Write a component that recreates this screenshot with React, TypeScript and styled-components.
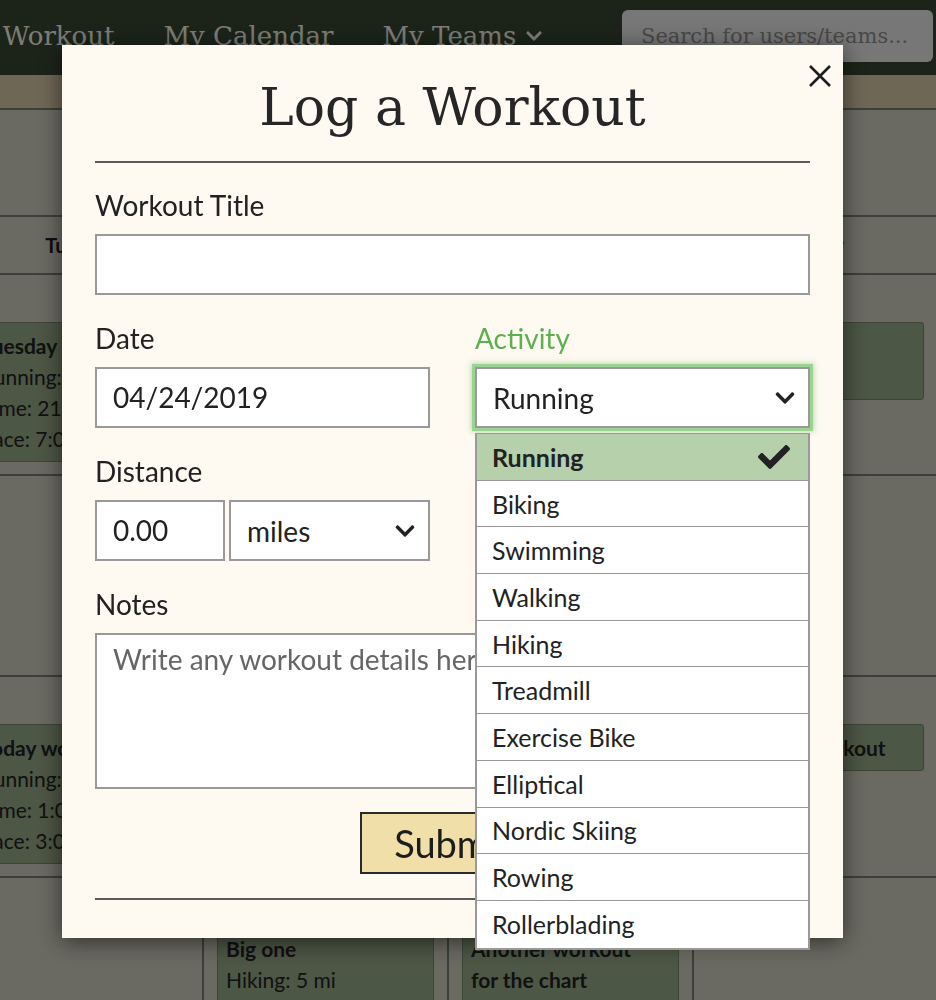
import React from "react";
import styled, { createGlobalStyle } from "styled-components";
import { FaCheck, FaChevronDown } from "react-icons/fa";

const GlobalStyle = createGlobalStyle`
  html, body { margin: 0; padding: 0; }
  body {
    width: 936px;
    height: 1000px;
    overflow: hidden;
    background: #d6d4c4;
    font-family: Lato, "Noto Sans", sans-serif;
  }
  * { box-sizing: border-box; }
`;

const Page = styled.div`
  width: 936px;
  height: 1000px;
  overflow: hidden;
  position: relative;
`;

const NavBar = styled.nav`
  height: 75px;
  background: #384832;
  display: flex;
  align-items: flex-start;
  padding-top: 10px;
`;

const NavLinks = styled.div`
  display: flex;
  gap: 49px;
  margin-left: -55px;
  flex: 1;
`;

const NavLink = styled.span`
  font-family: "DejaVu Serif", serif;
  font-size: 26px;
  line-height: 52px;
  color: #fbfbee;
  white-space: nowrap;
  display: flex;
  align-items: center;
  gap: 9px;
`;

const SearchBox = styled.div`
  width: 311px;
  height: 52px;
  margin-right: 3px;
  background: #eeeeee;
  border-radius: 6px;
  padding-left: 19px;
  font-family: "DejaVu Serif", serif;
  font-size: 21px;
  line-height: 52px;
  color: #919191;
  white-space: nowrap;
  overflow: hidden;
`;

const Band = styled.div`
  height: 35px;
  background: #decead;
  border-bottom: 2px solid #7e7e74;
`;

const Calendar = styled.div`
  margin-left: -41px;
  padding-top: 105px;
`;

const HeaderRow = styled.div`
  display: grid;
  grid-template-columns: repeat(4, 245px);
  height: 60px;
  border-top: 2px solid #7e7e74;
  border-bottom: 2px solid #7e7e74;
`;

const HeaderCell = styled.div`
  text-align: center;
  font-weight: 700;
  font-size: 20px;
  line-height: 56px;
  color: #1c1c1c;
`;

const WeekRow = styled.div`
  display: grid;
  grid-template-columns: repeat(4, 245px);
  height: 201px;
  border-bottom: 2px solid #7e7e74;
`;

const DayCell = styled.div`
  border-right: 2px solid #7e7e74;
  padding: 47px 13px 0;
`;

const Card = styled.div`
  background: #9aae8a;
  border: 1px solid #7a8a6e;
  border-radius: 3px;
  padding: 7px 8px;
  font-size: 21px;
  line-height: 31px;
  color: #222;
  white-space: nowrap;
  overflow: hidden;
`;

const CardTitle = styled.div`
  font-weight: 700;
`;

const Overlay = styled.div`
  position: fixed;
  inset: 0;
  background: rgba(0, 0, 0, 0.5);
`;

const Modal = styled.div`
  position: absolute;
  left: 62px;
  top: 45px;
  width: 781px;
  background: #fef9f1;
  padding: 32px 33px 38px;
  box-shadow: 0 4px 22px rgba(0, 0, 0, 0.55);
`;

const CloseButton = styled.button`
  position: absolute;
  top: 18px;
  right: 10px;
  width: 26px;
  height: 26px;
  padding: 0;
  border: none;
  background: transparent;
  display: flex;
  align-items: center;
  justify-content: center;
`;

const Title = styled.h1`
  margin: 0;
  font-family: "DejaVu Serif", serif;
  font-weight: 400;
  font-size: 52px;
  line-height: 60px;
  text-align: center;
  color: #262626;
`;

const Divider = styled.hr<{ $top: number }>`
  margin: ${(p) => p.$top}px 0 0;
  border: none;
  height: 2px;
  background: #5a5a5a;
`;

const Form = styled.div`
  margin-top: 25px;
  display: flex;
  flex-direction: column;
  gap: 26px;
`;

const TwoCols = styled.div`
  display: grid;
  grid-template-columns: 335px 335px;
  column-gap: 45px;
  row-gap: 26px;
`;

const Field = styled.div`
  display: flex;
  flex-direction: column;
  gap: 12px;
  position: relative;
`;

const Label = styled.label<{ $active?: boolean }>`
  font-size: 28px;
  line-height: 34px;
  color: ${(p) => (p.$active ? "#5bb04f" : "#222")};
`;

const TextBox = styled.div<{ $width?: number }>`
  height: 61px;
  width: ${(p) => (p.$width ? `${p.$width}px` : "100%")};
  flex: none;
  background: #fff;
  border: 2px solid #999;
  padding: 0 16px;
  font-size: 28px;
  line-height: 57px;
  color: #222;
  white-space: nowrap;
  overflow: hidden;
`;

const SelectBox = styled.div<{ $focused?: boolean }>`
  height: 61px;
  flex: 1;
  background: #fff;
  border: 2px solid #999;
  padding: 0 12px 0 16px;
  display: flex;
  align-items: center;
  justify-content: space-between;
  font-size: 28px;
  color: #222;
  box-shadow: ${(p) =>
    p.$focused ? "0 0 0 3px #9bd393, 0 0 5px 4px rgba(120, 200, 110, 0.5)" : "none"};
`;

const InputRow = styled.div`
  display: flex;
  gap: 4px;
`;

const NotesArea = styled.div`
  height: 156px;
  background: #fff;
  border: 2px solid #999;
  padding: 5px 16px;
  font-size: 28px;
  line-height: 38px;
  color: #666;
  white-space: nowrap;
  overflow: hidden;
`;

const SubmitRow = styled.div`
  display: flex;
  justify-content: center;
  margin-top: 23px;
`;

const SubmitButton = styled.button`
  width: 186px;
  height: 62px;
  background: #f1dfa9;
  border: 2px solid #2a2a2a;
  font-family: Lato, sans-serif;
  font-size: 38px;
  color: #1c1c1c;
  padding: 0;
`;

const DropdownList = styled.ul`
  position: absolute;
  left: 0;
  right: 0;
  top: calc(100% + 5px);
  margin: 0;
  padding: 0;
  list-style: none;
  background: #fff;
  border: 2px solid #999;
  border-top: 1px solid #999;
  z-index: 2;
`;

const DropdownItem = styled.li<{ $selected?: boolean }>`
  height: 46.7px;
  display: flex;
  align-items: center;
  justify-content: space-between;
  padding: 0 18px 0 15px;
  font-size: 25px;
  color: #222;
  font-weight: ${(p) => (p.$selected ? 700 : 400)};
  background: ${(p) => (p.$selected ? "#b5d0aa" : "#fff")};
  border-bottom: 1.5px solid #999;
  &:last-child { border-bottom: none; }
`;

const activities = [
  "Running",
  "Biking",
  "Swimming",
  "Walking",
  "Hiking",
  "Treadmill",
  "Exercise Bike",
  "Elliptical",
  "Nordic Skiing",
  "Rowing",
  "Rollerblading",
];

const CloseIcon = () => (
  <svg width="24" height="24" viewBox="0 0 24 24">
    <path d="M2 2 L22 22 M22 2 L2 22" stroke="#1e1e1e" strokeWidth="2.6" />
  </svg>
);

export default function App() {
  return (
    <>
      <GlobalStyle />
      <Page>
        <NavBar>
          <NavLinks>
            <NavLink>Log Workout</NavLink>
            <NavLink>My Calendar</NavLink>
            <NavLink>
              My Teams <FaChevronDown size={18} />
            </NavLink>
          </NavLinks>
          <SearchBox>Search for users/teams...</SearchBox>
        </NavBar>
        <Band />
        <Calendar>
          <HeaderRow>
            <HeaderCell>Tuesday</HeaderCell>
            <HeaderCell>Wednesday</HeaderCell>
            <HeaderCell>Thursday</HeaderCell>
            <HeaderCell>Friday</HeaderCell>
          </HeaderRow>
          <WeekRow>
            <DayCell>
              <Card>
                <CardTitle>Tuesday run</CardTitle>
                <div>Running: 3 mi</div>
                <div>Time: 21:00</div>
                <div>Pace: 7:00</div>
              </Card>
            </DayCell>
            <DayCell />
            <DayCell />
            <DayCell>
              <Card>
                <CardTitle>Friday jog</CardTitle>
                <div>Walking: 2 mi</div>
              </Card>
            </DayCell>
          </WeekRow>
          <WeekRow>
            <DayCell />
            <DayCell />
            <DayCell />
            <DayCell />
          </WeekRow>
          <WeekRow>
            <DayCell>
              <Card>
                <CardTitle>Today workout</CardTitle>
                <div>Running: 1 mi</div>
                <div>Time: 1:00</div>
                <div>Pace: 3:00</div>
              </Card>
            </DayCell>
            <DayCell />
            <DayCell />
            <DayCell>
              <Card>
                <CardTitle>Recovery workout</CardTitle>
              </Card>
            </DayCell>
          </WeekRow>
          <WeekRow>
            <DayCell />
            <DayCell>
              <Card>
                <CardTitle>Big one</CardTitle>
                <div>Hiking: 5 mi</div>
              </Card>
            </DayCell>
            <DayCell>
              <Card>
                <CardTitle>
                  Another workout
                  <br />
                  for the chart
                </CardTitle>
                <div>Biking: 10 mi</div>
              </Card>
            </DayCell>
            <DayCell />
          </WeekRow>
        </Calendar>
        <Overlay>
          <Modal>
            <CloseButton aria-label="Close">
              <CloseIcon />
            </CloseButton>
            <Title>Log a Workout</Title>
            <Divider $top={24} />
            <Form>
              <Field>
                <Label>Workout Title</Label>
                <TextBox />
              </Field>
              <TwoCols>
                <Field>
                  <Label>Date</Label>
                  <TextBox>04/24/2019</TextBox>
                </Field>
                <Field>
                  <Label $active>Activity</Label>
                  <InputRow>
                    <SelectBox $focused>
                      <span>Running</span>
                      <FaChevronDown size={22} color="#222" />
                    </SelectBox>
                  </InputRow>
                  <DropdownList>
                    {activities.map((a, i) => (
                      <DropdownItem key={a} $selected={i === 0}>
                        <span>{a}</span>
                        {i === 0 && <FaCheck size={32} color="#222" />}
                      </DropdownItem>
                    ))}
                  </DropdownList>
                </Field>
                <Field>
                  <Label>Distance</Label>
                  <InputRow>
                    <TextBox $width={130}>0.00</TextBox>
                    <SelectBox>
                      <span>miles</span>
                      <FaChevronDown size={22} color="#222" />
                    </SelectBox>
                  </InputRow>
                </Field>
              </TwoCols>
              <Field>
                <Label>Notes</Label>
                <NotesArea>Write any workout details here</NotesArea>
              </Field>
            </Form>
            <SubmitRow>
              <SubmitButton>Submit</SubmitButton>
            </SubmitRow>
            <Divider $top={24} />
          </Modal>
        </Overlay>
      </Page>
    </>
  );
}
